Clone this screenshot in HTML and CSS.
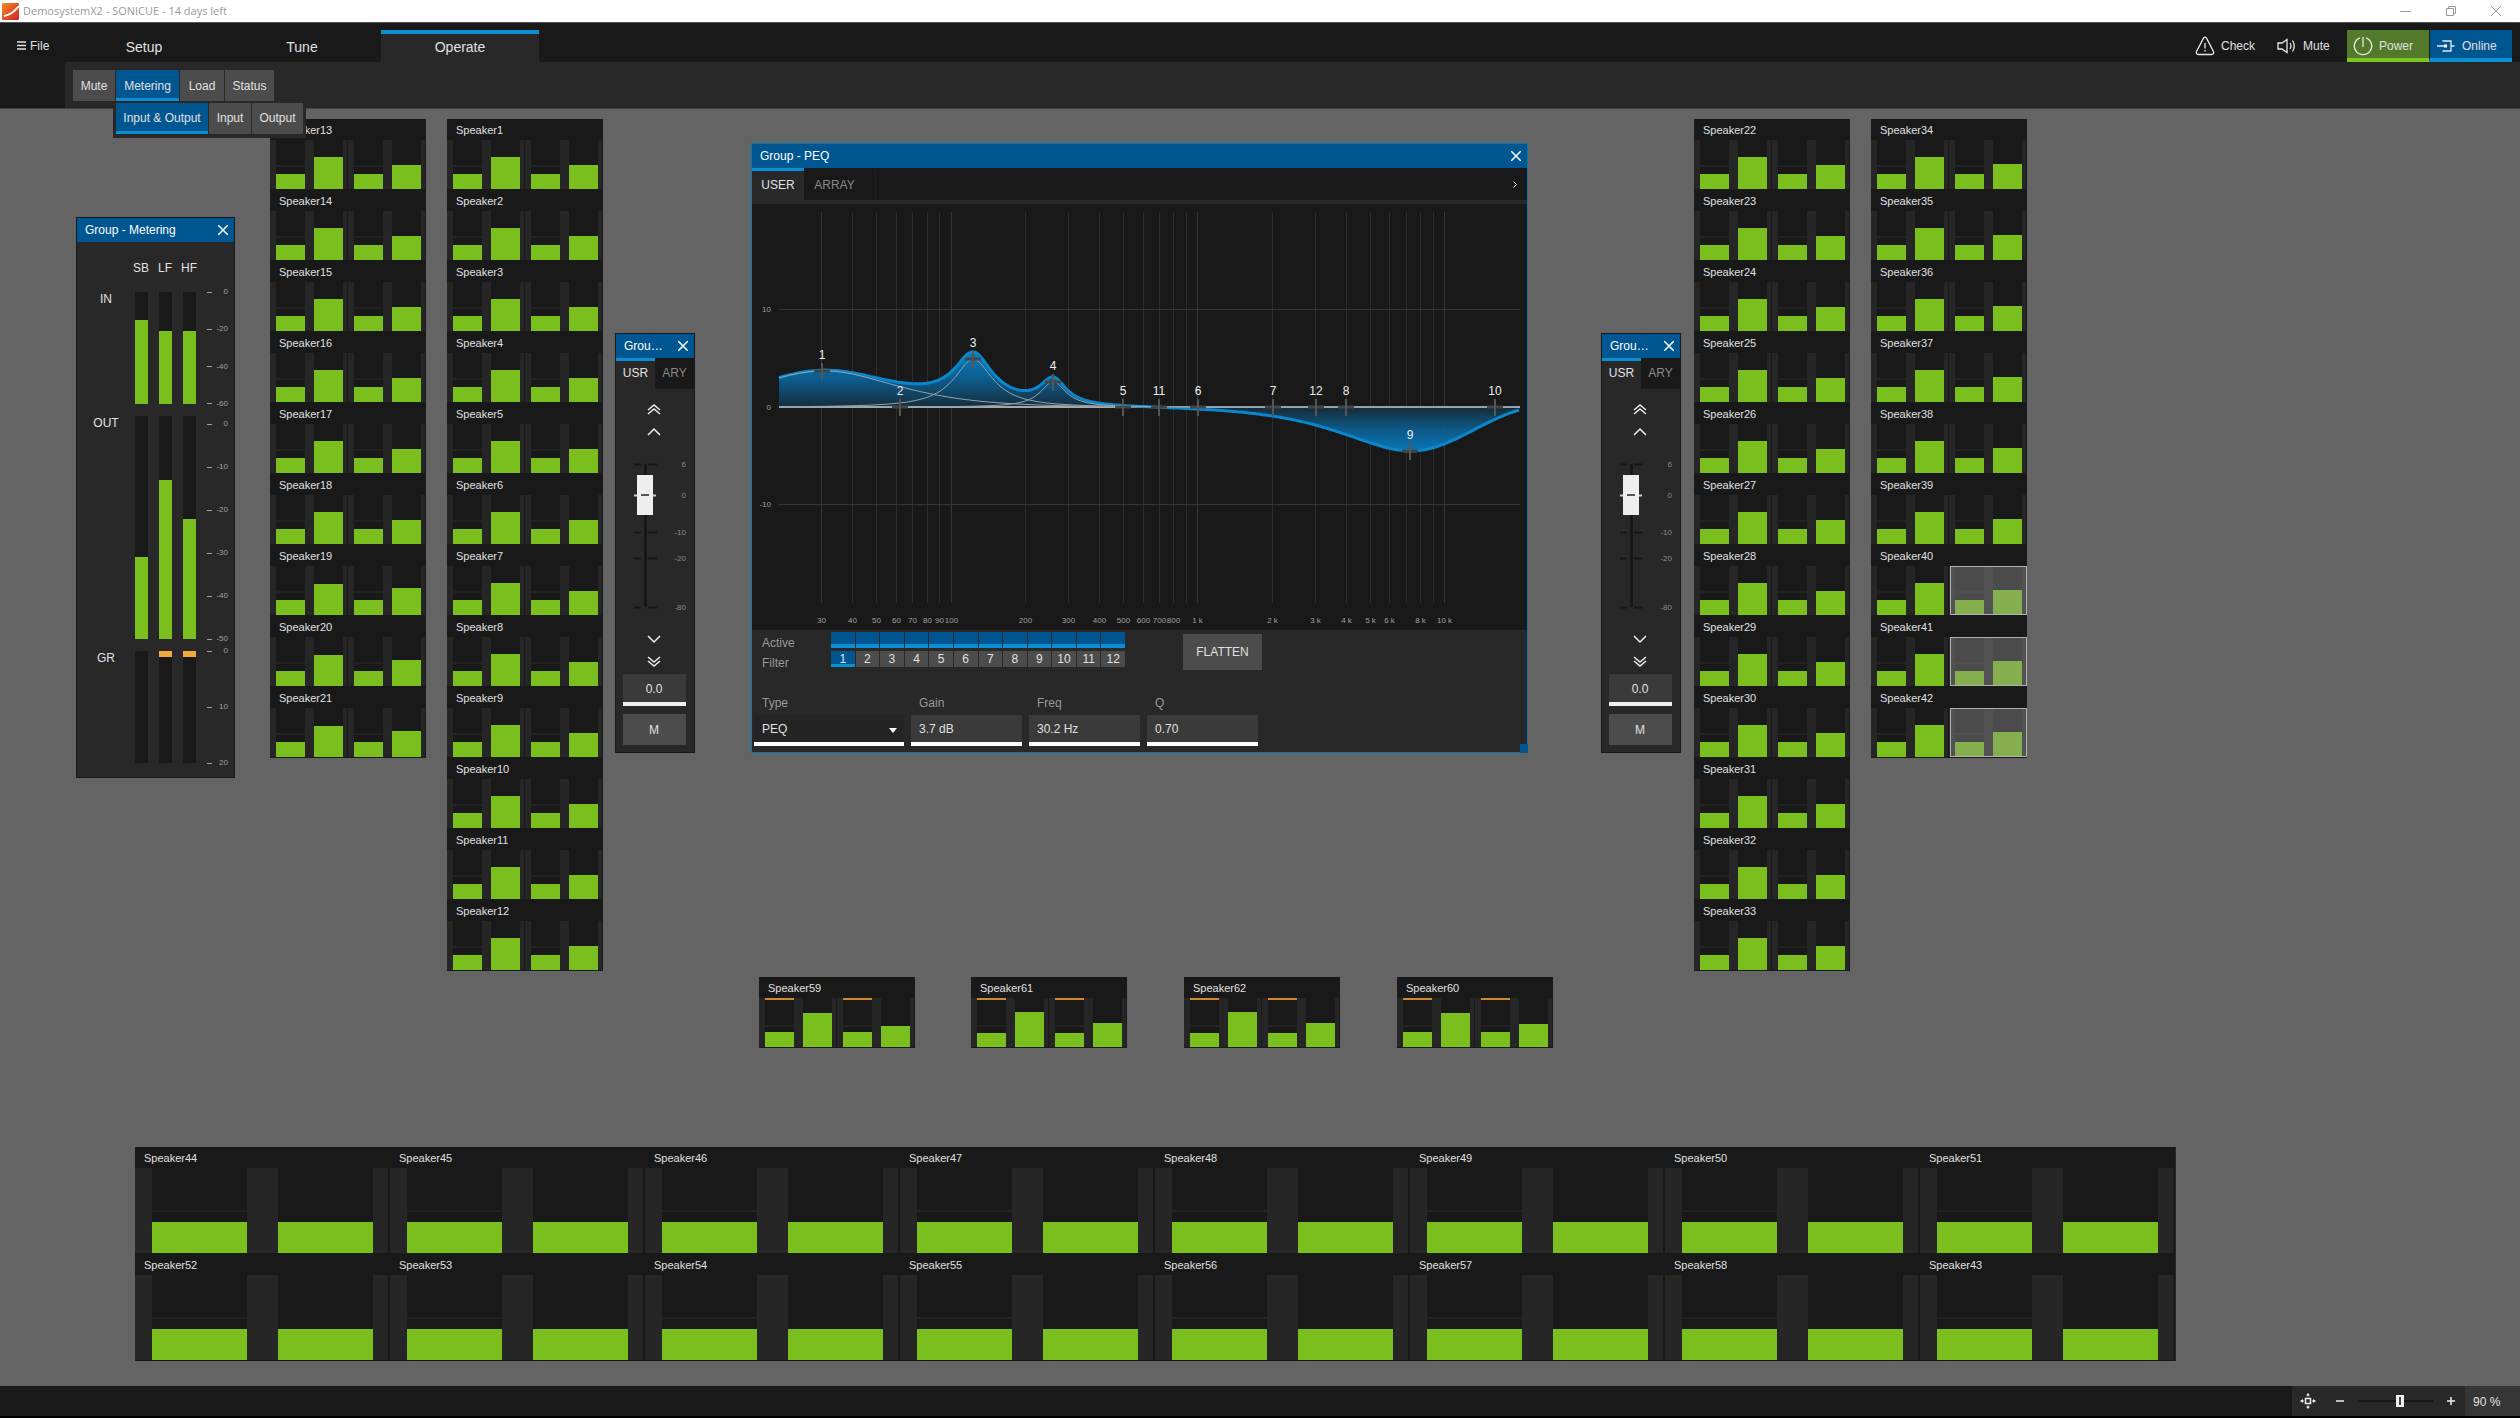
FILE: index.html
```html
<!DOCTYPE html>
<html lang="en">
<head>
<meta charset="utf-8">
<title>DemosystemX2 - SONICUE - 14 days left</title>
<link rel="stylesheet" href="styles.css">
</head>
<body>
<div class="titlebar">
  <svg class="logo" width="17" height="17" viewBox="0 0 17 17"><defs><linearGradient id="lg" x1="0" y1="0" x2="1" y2="1"><stop offset="0" stop-color="#f28a1e"/><stop offset="1" stop-color="#d3202a"/></linearGradient></defs><rect width="17" height="17" rx="1" fill="url(#lg)"/><path d="M2 13C8 12 13 8 17 3" stroke="#fff" stroke-width="2" fill="none"/></svg>
  <span class="titlebar-text">DemosystemX2 - SONICUE - 14 days left</span>
  <div class="win-controls">
    <button aria-label="Minimize"><svg width="12" height="12"><path d="M0 6.5h11"/></svg></button>
    <button aria-label="Restore"><svg width="12" height="12"><path d="M1.500 3.500h7v7h-7zM3.500 3.500v-2h7v7h-2"/></svg></button>
    <button aria-label="Close"><svg width="12" height="12"><path d="M1 1l10 10M11 1L1 11"/></svg></button>
  </div>
</div>

<header class="header">
  <div class="file-area">
    <button class="file-button"><svg width="9" height="9"><path d="M0 1h9M0 4.500h9M0 8h9" stroke="#e4e4e4" stroke-width="1.500"/></svg>File</button>
  </div>
  <div class="header-main">
    <div class="nav-row">
      <nav class="main-tabs">
        <button class="main-tab">Setup</button>
        <button class="main-tab">Tune</button>
        <button class="main-tab is-active">Operate</button>
      </nav>
      <div class="status-actions">
        <button class="status-action check"><svg width="20" height="20" viewBox="0 0 20 20"><path d="M8.500 2.200Q10 .2 11.500 2.200L18.500 15.500Q19.300 18.300 16.500 18.500H3.500Q.7 18.300 1.500 15.500Z"/><path d="M10 7v5.500M10 14v1.500"/></svg>Check</button>
        <button class="status-action mute"><svg width="20" height="20" viewBox="0 0 20 20"><path d="M1 7h4l5-3.500v13L5 13H1zM13 7q2 3 0 6M15.500 4.500q3.500 5.500 0 11"/></svg>Mute</button>
        <button class="status-action power"><svg width="20" height="20" viewBox="0 0 20 20"><path d="M7 1.800a8.700 8.700 0 1 0 6 0M10 1v10"/></svg>Power</button>
        <button class="status-action online"><svg width="20" height="20" viewBox="0 0 20 20"><path d="M1 10h8M7 5.500V5h8v10H7v-.5M15 10h3.500"/><rect x="8" y="8.500" width="3" height="3" fill="#fff" stroke="none"/></svg>Online</button>
      </div>
    </div>
    <div class="tool-row">
      <button class="tool w42">Mute</button>
      <button class="tool w63 is-active">Metering</button>
      <button class="tool w43">Load</button>
      <button class="tool w49">Status</button>
    </div>
    <div class="sub-menu">
      <button class="tool w92 is-active">Input &amp; Output</button>
      <button class="tool w42">Input</button>
      <button class="tool w51">Output</button>
    </div>
  </div>
</header>

<main class="canvas">
  <section class="stack stack-a" data-first="13" data-count="9"></section>
  <section class="stack stack-b" data-first="1" data-count="12"></section>
  <section class="stack stack-c" data-first="22" data-count="12"></section>
  <section class="stack stack-d" data-first="34" data-count="9"></section>
  <section class="stack sub-1" data-first="59" data-count="1"></section>
  <section class="stack sub-2" data-first="61" data-count="1"></section>
  <section class="stack sub-3" data-first="62" data-count="1"></section>
  <section class="stack sub-4" data-first="60" data-count="1"></section>
  <section class="wall"></section>

  <section class="window metering">
    <div class="window-title"><span>Group - Metering</span><button class="close" aria-label="Close"><svg width="10" height="10"><path d="M0 0l10 10M10 0L0 10"/></svg></button></div>
    <div class="bands"><span>SB</span><span>LF</span><span>HF</span></div>
    <div class="level-row">
      <span class="level-name">IN</span>
      <div class="track"><i class="fill" style="height:84px"></i></div>
      <div class="track"><i class="fill" style="height:73px"></i></div>
      <div class="track"><i class="fill" style="height:73px"></i></div>
      <ol class="scale"><li>0</li><li>-20</li><li>-40</li><li>-60</li></ol>
    </div>
    <div class="level-row level-out">
      <span class="level-name">OUT</span>
      <div class="track"><i class="fill" style="height:82px"></i></div>
      <div class="track"><i class="fill" style="height:159px"></i></div>
      <div class="track"><i class="fill" style="height:120px"></i></div>
      <ol class="scale"><li>0</li><li>-10</li><li>-20</li><li>-30</li><li>-40</li><li>-50</li></ol>
    </div>
    <div class="level-row level-gr">
      <span class="level-name">GR</span>
      <div class="track"></div>
      <div class="track"><i class="fill" style="height:6px"></i></div>
      <div class="track"><i class="fill" style="height:6px"></i></div>
      <ol class="scale"><li>0</li><li>10</li><li>20</li></ol>
    </div>
  </section>

  <section class="window fader fader-left">
    <div class="window-title"><span>Grou…</span><button class="close" aria-label="Close"><svg width="10" height="10"><path d="M0 0l10 10M10 0L0 10"/></svg></button></div>
    <div class="fader-tabs"><button class="fader-tab is-active">USR</button><button class="fader-tab">ARY</button></div>
    <div class="fader-body">
      <button class="step" aria-label="Up fast"><svg width="14" height="12"><path d="M1 7l6-5 6 5M1 11l6-5 6 5"/></svg></button>
      <button class="step" aria-label="Up"><svg width="14" height="12"><path d="M1 9l6-6 6 6"/></svg></button>
      <div class="fader-slot">
        <svg width="76" height="183"><path class="slot" d="M29.500 20v143"/><path class="notch" d="M18 20.500h7M32 20.500h9M18 88.500h7M32 88.500h9M18 114.500h7M32 114.500h9M18 163.500h7M32 163.500h9"/><path class="unity" d="M18 51.500h22"/><g class="tick-text"><text x="70" y="23">6</text><text x="70" y="54">0</text><text x="70" y="91">-10</text><text x="70" y="117">-20</text><text x="70" y="166">-80</text></g></svg>
        <input type="range" class="fader-input" aria-label="Level" min="0" max="143" value="112">
      </div>
      <button class="step" aria-label="Down"><svg width="14" height="12"><path d="M1 3l6 6 6-6"/></svg></button>
      <button class="step" aria-label="Down fast"><svg width="14" height="12"><path d="M1 1l6 5 6-5M1 5l6 5 6-5"/></svg></button>
      <input class="fader-value" aria-label="Level value" value="0.0">
      <button class="fader-mute">M</button>
    </div>
  </section>

  <section class="window fader fader-right">
    <div class="window-title"><span>Grou…</span><button class="close" aria-label="Close"><svg width="10" height="10"><path d="M0 0l10 10M10 0L0 10"/></svg></button></div>
    <div class="fader-tabs"><button class="fader-tab is-active">USR</button><button class="fader-tab">ARY</button></div>
    <div class="fader-body">
      <button class="step" aria-label="Up fast"><svg width="14" height="12"><path d="M1 7l6-5 6 5M1 11l6-5 6 5"/></svg></button>
      <button class="step" aria-label="Up"><svg width="14" height="12"><path d="M1 9l6-6 6 6"/></svg></button>
      <div class="fader-slot">
        <svg width="76" height="183"><path class="slot" d="M29.500 20v143"/><path class="notch" d="M18 20.500h7M32 20.500h9M18 88.500h7M32 88.500h9M18 114.500h7M32 114.500h9M18 163.500h7M32 163.500h9"/><path class="unity" d="M18 51.500h22"/><g class="tick-text"><text x="70" y="23">6</text><text x="70" y="54">0</text><text x="70" y="91">-10</text><text x="70" y="117">-20</text><text x="70" y="166">-80</text></g></svg>
        <input type="range" class="fader-input" aria-label="Level" min="0" max="143" value="112">
      </div>
      <button class="step" aria-label="Down"><svg width="14" height="12"><path d="M1 3l6 6 6-6"/></svg></button>
      <button class="step" aria-label="Down fast"><svg width="14" height="12"><path d="M1 1l6 5 6-5M1 5l6 5 6-5"/></svg></button>
      <input class="fader-value" aria-label="Level value" value="0.0">
      <button class="fader-mute">M</button>
    </div>
  </section>

  <section class="window peq">
    <div class="window-title"><span>Group - PEQ</span><button class="close" aria-label="Close"><svg width="10" height="10"><path d="M0 0l10 10M10 0L0 10"/></svg></button></div>
    <div class="peq-tabs">
      <button class="peq-tab is-active">USER</button>
      <button class="peq-tab">ARRAY</button>
      <button class="peq-more" aria-label="More"><svg width="5" height="7"><path d="M.5 .5l3 3-3 3"/></svg></button>
    </div>
    <svg class="graph" viewBox="0 0 775 426">
      <defs>
        <linearGradient id="boost" gradientUnits="userSpaceOnUse" x1="0" y1="147" x2="0" y2="203"><stop offset="0" stop-color="#0889d0"/><stop offset=".5" stop-color="#0b6298"/><stop offset="1" stop-color="#162f3f"/></linearGradient>
        <linearGradient id="cut" gradientUnits="userSpaceOnUse" x1="0" y1="203" x2="0" y2="248"><stop offset="0" stop-color="#162c38"/><stop offset=".5" stop-color="#0c5f92"/><stop offset="1" stop-color="#0880c4"/></linearGradient>
        <clipPath id="above"><rect width="775" height="203"/></clipPath>
        <clipPath id="below"><rect y="203" width="775" height="223"/></clipPath>
      </defs>
    </svg>
    <div class="peq-controls">
      <div class="filter-row">
        <div class="filter-names"><span>Active</span><span>Filter</span></div>
        <div class="filter-grid"></div>
        <button class="flatten">FLATTEN</button>
      </div>
      <div class="field-row">
        <div class="field field-type"><label for="type">Type</label><div class="select-box"><select id="type"><option>PEQ</option></select></div></div>
        <div class="field"><label for="gain">Gain</label><input id="gain" value="3.7 dB"></div>
        <div class="field"><label for="freq">Freq</label><input id="freq" value="30.2 Hz"></div>
        <div class="field"><label for="q">Q</label><input id="q" value="0.70"></div>
      </div>
    </div>
  </section>
</main>

<footer class="statusbar">
  <div class="zoom-tools">
    <button aria-label="Fit"><svg width="16" height="16" viewBox="0 0 16 16"><rect x="5.500" y="5.500" width="5" height="5" fill="none" stroke="#eee" stroke-width="1.500"/><path d="M8 0l2 2.500H6zM8 16l2-2.500H6zM0 8l3-2v4zM16 8l-3-2v4z" fill="#eee"/><path d="M1 8h3M12 8h3M8 1v2.500M8 12.500V15" stroke="#eee"/></svg></button>
    <button aria-label="Zoom out"><svg width="8" height="8"><path d="M0 4h8" stroke="#eee" stroke-width="1.500"/></svg></button>
    <input type="range" class="zoom-input" aria-label="Zoom" min="0" max="100" value="57">
    <button aria-label="Zoom in"><svg width="8" height="8"><path d="M0 4h8M4 0v8" stroke="#eee" stroke-width="1.500"/></svg></button>
  </div>
  <div class="zoom-value">90 %</div>
</footer>
<script src="script.js"></script>
</body>
</html>
```
FILE: styles.css
```css
* { box-sizing: border-box; }

body {
  margin: 0;
  min-height: 100vh;
  display: flex;
  flex-direction: column;
  background: #646464;
  color: #e0e0e0;
  font: 12px/16px "Liberation Sans", Arial, sans-serif;
  overflow-x: hidden;
}

button, input, select { font: inherit; color: inherit; border: 0; padding: 0; margin: 0; background: none; border-radius: 0; outline: 0; }
button { display: flex; align-items: center; justify-content: center; }
svg { display: block; flex: none; }

/* Title bar */
.titlebar { display: flex; align-items: center; height: 23px; background: #fff; border-bottom: 1px solid #555; padding-left: 2px; }
.titlebar-text { margin-left: 4px; font-family: "Open Sans", sans-serif; font-size: 11px; color: #999; }
.win-controls { margin-left: auto; display: flex; gap: 33px; padding-right: 18px; }
.win-controls path { fill: none; stroke: #999; }

/* Header */
.header { display: flex; height: 86px; background: #191919; border-bottom: 1px solid #444; }
.file-area { width: 65px; }
.file-button { gap: 4px; height: 39px; padding: 6px 0 0 17px; }
.header-main { position: relative; flex: 1; }
.nav-row { display: flex; justify-content: space-between; height: 39px; padding-top: 7px; }
.main-tabs { display: flex; }
.main-tab { width: 158px; font-size: 14px; border-top: 4px solid transparent; padding-bottom: 3px; }
.main-tab.is-active { background: #282828; border-color: #0e8ed0; }
.status-actions { display: flex; padding-right: 8px; }
.status-action { justify-content: flex-start; border-bottom: 4px solid transparent; padding-top: 4px; }
.status-action path { fill: none; stroke: #e8e8e8; stroke-width: 1.3; }
.check { gap: 6px; width: 82px; }
.mute { gap: 6px; width: 70px; }
.power { gap: 6px; width: 82px; padding-left: 6px; background: #527a2a; border-color: #7cc41e; }
.online { gap: 6px; width: 83px; padding-left: 6px; background: #005691; border-color: #0a8fd4; border-left: 1px solid #191919; }

.tool-row { display: flex; gap: 1px; height: 46px; padding: 8px; background: #282828; }
.tool { height: 31px; background: #4c4c4c; border-bottom: 3px solid #4c4c4c; padding-top: 3px; }
.tool.is-active { background: #005691; border-color: #0a8fd4; }
.w42 { width: 42px; }
.w43 { width: 44px; }
.w49 { width: 49px; }
.w51 { width: 51px; }
.w63 { width: 63px; }
.w92 { width: 92px; }
.sub-menu { position: absolute; left: 48px; top: 78px; z-index: 5; display: flex; gap: 1px; padding: 2px 3px 4px; background: #282828; }
.sub-menu .tool { padding-top: 1px; }

/* Canvas with freely placed widgets */
.canvas { position: relative; flex: 1; min-height: 1277px; }
.stack, .wall, .window { position: absolute; }
.stack { width: 156px; }
.stack-a { left: 270px; top: 10px; }
.stack-b { left: 447px; top: 10px; }
.stack-c { left: 1694px; top: 10px; }
.stack-d { left: 1871px; top: 10px; }
.sub-1 { left: 759px; top: 868px; }
.sub-2 { left: 971px; top: 868px; }
.sub-3 { left: 1184px; top: 868px; }
.sub-4 { left: 1397px; top: 868px; }

.speaker { height: 71px; background: #191919; border-bottom: 1px solid #191919; }
.speaker-name { height: 21px; padding-left: 9px; font-size: 11px; line-height: 22px; }
.pairs { display: flex; height: 49px; }
.pair { position: relative; display: flex; gap: 9px; width: 78px; padding: 0 4px 0 6px; background: #262626; border-right: 1px solid #191919; }
.meter { position: relative; width: 29px; background: #191919; display: flex; align-items: flex-end; }
.meter:nth-child(odd)::before { content: ""; position: absolute; left: 0; right: 0; top: 25px; height: 2px; background: #222; }
.meter.is-limited { border-top: 2px solid #cf8a34; }
.bar { position: relative; width: 100%; background: #7abf1e; }
.pair.is-selected::after { content: ""; position: absolute; left: 1px; right: -1px; top: 0; bottom: 0; background: rgba(150, 150, 150, .4); border: 1px solid #b0b0b0; }

.wall { left: 135px; top: 1038px; display: grid; grid-template-columns: repeat(8, 255px); border-right: 1px solid #282828; }
.wall .speaker { height: 107px; }
.wall .pairs { height: 85px; }
.wall .pair { width: 255px; gap: 31px; padding: 0 15px 0 17px; border-right-width: 2px; }
.wall .meter { width: 95px; }
.wall .meter:nth-child(odd)::before { top: 42px; }

/* Floating windows */
.window { background: #282828; border: 1px solid #191919; }
.window-title { display: flex; align-items: center; justify-content: space-between; height: 24px; padding: 0 6px 0 8px; background: #005691; color: #fff; }
.close path { stroke: #fff; stroke-width: 1.5; }

.metering { left: 76px; top: 108px; width: 159px; padding-bottom: 14px; }
.bands { display: flex; gap: 4px; margin: 18px 0 16px 54px; }
.bands span { width: 20px; text-align: center; white-space: nowrap; }
.level-row { display: flex; gap: 11px; height: 112px; margin-bottom: 12px; }
.level-name { width: 36px; margin-left: 11px; text-align: center; line-height: 14px; }
.level-out { height: 223px; }
.level-gr { margin-bottom: 0; }
.track { width: 13px; background: #191919; display: flex; align-items: flex-end; }
.level-gr .track { align-items: flex-start; }
.fill { width: 100%; background: #7abf1e; }
.level-gr .fill { background: #f0a93c; }
.scale { display: flex; flex-direction: column; justify-content: space-between; width: 21px; margin: -5px 0; padding: 0; list-style: none; font-size: 8px; line-height: 10px; color: #a0a0a0; }
.level-out .scale { margin-top: 3px; }
.scale li { display: flex; align-items: center; justify-content: space-between; }
.scale li::before { content: ""; width: 5px; height: 1px; background: #a0a0a0; }

.fader { top: 224px; width: 80px; height: 420px; }
.fader-left { left: 615px; }
.fader-right { left: 1601px; }
.fader-tabs { display: flex; height: 31px; }
.fader-tab { flex: 1; background: #191919; color: #8a8a8a; border-top: 3px solid #191919; padding-bottom: 4px; }
.fader-tab.is-active { background: #282828; color: #e0e0e0; border-color: #0a8fd4; }
.fader-body { display: flex; flex-direction: column; align-items: center; padding: 8px 2px 0 0; }
.step { width: 40px; height: 23px; }
.step path { fill: none; stroke: #eee; stroke-width: 1.5; }
.fader-slot { position: relative; height: 184px; padding-top: 1px; }
.slot { stroke: #171717; stroke-width: 3; }
.notch { stroke: #171717; stroke-width: 2; }
.unity { stroke: #ccc; stroke-width: 2; }
.tick-text { font-size: 8px; fill: #8a8a8a; text-anchor: end; }
.fader-input { position: absolute; left: 21px; top: 1px; width: 16px; height: 183px; appearance: none; writing-mode: vertical-lr; direction: rtl; }
.fader-input::-webkit-slider-thumb { appearance: none; width: 16px; height: 40px; background: linear-gradient(#555, #555) center / 8px 2px no-repeat #eee; }
.fader-value { width: 63px; height: 32px; padding-top: 2px; margin-top: 1px; background: #3a3a3a; border-bottom: 4px solid #f0f0f0; text-align: center; }
.fader-mute { width: 63px; height: 31px; margin-top: 8px; background: #4c4c4c; }

.peq { left: 751px; top: 34px; width: 777px; border-color: #0f76ac; }
.peq-tabs { display: flex; height: 36px; background: #191919; border-bottom: 4px solid #282828; }
.peq-tab { width: 52px; border-top: 3px solid #191919; color: #8a8a8a; padding-bottom: 2px; }
.peq-tab.is-active { background: #282828; border-color: #0a8fd4; color: #e0e0e0; }
.peq-tab + .peq-tab { width: 72px; padding-right: 10px; border-right: 1px solid #222; }
.peq-more { margin-left: auto; padding-right: 9px; }
.peq-more path { fill: none; stroke: #fff; }
.graph { width: 100%; background: #191919; }
.grid-line { stroke: #2c2c2c; }
.grid-line.decade { stroke: #363636; }
.axis-text { font-size: 8px; fill: #a0a0a0; }
.zero { stroke: #a8a8a8; stroke-width: 2; }
.single { fill: none; stroke: #8fa3ae; }
.total { fill: none; stroke: #0a86cc; stroke-width: 3; }
.node { stroke: #555; stroke-width: 2; }
.node-dash { stroke: #444; stroke-width: 3; }
.node-text { fill: #eee; text-anchor: middle; }

.peq-controls { height: 122px; padding-top: 2px; }
.filter-row { display: flex; }
.filter-names { display: flex; flex-direction: column; gap: 4px; width: 79px; padding: 3px 0 0 10px; color: #999; }
.filter-grid { display: grid; grid-template-columns: repeat(12, 1fr); gap: 3px 1px; width: 294px; align-content: start; }
.filter-grid button { height: 16px; background: #4c4c4c; border-bottom: 1px solid #4c4c4c; }
.filter-grid .is-active { background: #005691; border-bottom: 4px solid #0a8fd4; }
.filter-grid .is-active:not(:empty) { border-bottom-width: 3px; padding-top: 2px; }
.flatten { width: 79px; height: 36px; margin: 2px 0 0 58px; background: #4c4c4c; }
.field-row { display: flex; gap: 7px; padding: 24px 0 0 2px; }
.field { width: 111px; display: flex; flex-direction: column; gap: 4px; }
.field-type { width: 150px; }
.field label { padding-left: 8px; color: #999; }
.field input, .field select { width: 100%; height: 31px; padding-left: 8px; background: #3a3a3a; border-bottom: 4px solid #fff; appearance: none; }
.field select { display: block; background: #242424; }
.select-box { position: relative; }
.select-box::after { content: ""; position: absolute; right: 7px; top: 13px; border: 4px solid transparent; border-top: 5px solid #fff; border-bottom: 0; }
.peq::after { content: ""; position: absolute; right: -1px; bottom: -1px; width: 8px; height: 9px; background: #005691; }

/* Status bar */
.statusbar { display: flex; justify-content: flex-end; height: 32px; background: #191919; border-bottom: 2px solid #000; }
.zoom-tools { display: flex; align-items: center; width: 173px; padding-left: 8px; background: #282828; }
.zoom-tools button + input, .zoom-tools input + button { margin-left: 14px; }
.zoom-tools button + button { margin-left: 20px; }
.zoom-input { appearance: none; width: 75px; height: 12px; background: linear-gradient(#171717, #171717) center / 100% 2px no-repeat; }
.zoom-input::-webkit-slider-thumb { appearance: none; width: 8px; height: 12px; background: linear-gradient(#444, #444) center / 2px 8px no-repeat #f0f0f0; }
.zoom-value { width: 55px; padding: 8px 0 0 8px; background: #363636; }
```
FILE: script.js
```js
const LEVELS = { 59: [15, 34, 15, 21], 60: [15, 34, 15, 23], 61: [14, 35, 14, 24], 62: [14, 35, 14, 24] };
const SELECTED = [40, 41, 42];

function levelsOf(n) {
  if (LEVELS[n]) return LEVELS[n];
  if (n === 19) return [15, 31, 15, 27];
  if (n === 20 || n === 21) return [15, 31, 15, 26];
  return [15, 32, 15, n >= 34 ? 25 : 24];
}

function meter(height, limited) {
  return `<div class="meter${limited ? ' is-limited' : ''}"><i class="bar" style="height:${height}px"></i></div>`;
}

function speaker(n, pairs) {
  return `<div class="speaker"><div class="speaker-name">Speaker${n}</div><div class="pairs">${pairs}</div></div>`;
}

document.querySelectorAll('.stack').forEach((stack) => {
  const first = Number(stack.dataset.first);
  for (let n = first; n < first + Number(stack.dataset.count); n += 1) {
    const [a, b, c, d] = levelsOf(n);
    const limited = n >= 59;
    const selected = SELECTED.includes(n) ? ' is-selected' : '';
    stack.insertAdjacentHTML('beforeend', speaker(n,
      `<div class="pair">${meter(a, limited)}${meter(b)}</div><div class="pair${selected}">${meter(c, limited)}${meter(d)}</div>`));
  }
});

const wall = document.querySelector('.wall');
[44, 45, 46, 47, 48, 49, 50, 51, 52, 53, 54, 55, 56, 57, 58, 43].forEach((n) => {
  wall.insertAdjacentHTML('beforeend', speaker(n, `<div class="pair">${meter(31)}${meter(31)}</div>`));
});

const grid = document.querySelector('.filter-grid');
for (let i = 1; i <= 12; i += 1) grid.insertAdjacentHTML('beforeend', `<button class="is-active" aria-label="Filter ${i} active"></button>`);
for (let i = 1; i <= 12; i += 1) grid.insertAdjacentHTML('beforeend', `<button${i === 1 ? ' class="is-active"' : ''}>${i}</button>`);

/* Equalizer graph */
const ZERO = 203;
const xOf = (f) => 200 + 246.8 * Math.log10(f / 100);
const yOf = (db) => ZERO - 9.77 * db;
const warp = (f) => Math.tan(Math.PI * f / 48000);

function bell(f, f0, gain, q) {
  const w = warp(f) / warp(f0);
  const g = 10 ** (Math.abs(gain) / 20);
  const base = (1 - w * w) ** 2;
  const side = (w / q) ** 2;
  return Math.sign(gain) * 10 * Math.log10((base + g * g * side) / (base + side));
}

const FILTERS = [[30.2, 3.7, 0.7], [122, 4.9, 3], [257, 2.6, 4], [7240, -4.5, 0.7]];
function trace(fn) {
  const points = [];
  for (let x = 27; x <= 768; x += 2) {
    points.push(`${x} ${yOf(fn(100 * 10 ** ((x - 200) / 246.8))).toFixed(1)}`);
  }
  return 'M' + points.join('L');
}

const gridLines = [];
const labels = [];
[30, 40, 50, 60, 70, 80, 90, 100, 200, 300, 400, 500, 600, 700, 800, 900, 1000, 2000, 3000, 4000, 5000, 6000, 7000, 8000, 9000, 10000].forEach((f) => {
  const x = Math.floor(xOf(f)) - 0.5;
  gridLines.push(`<path class="grid-line${[30, 100, 1000, 10000].includes(f) ? ' decade' : ''}" d="M${x} 8V399"/>`);
  if (![900, 7000, 9000].includes(f)) {
    labels.push(`<text class="axis-text" text-anchor="middle" x="${x}" y="419">${f >= 1000 ? f / 1000 + ' k' : f}</text>`);
  }
});
gridLines.push('<path class="grid-line decade" d="M27 105.5H768M27 300.5H768"/>');
labels.push('<g class="axis-text" text-anchor="end"><text x="19" y="108">10</text><text x="19" y="206">0</text><text x="19" y="303">-10</text></g>');

const total = trace((f) => FILTERS.reduce((sum, p) => sum + bell(f, ...p), 0));
const area = `${total}L768 ${ZERO}L27 ${ZERO}Z`;
let out = gridLines.join('') + labels.join('');
out += `<path d="${area}" fill="url(#boost)" clip-path="url(#above)" opacity=".92"/><path d="${area}" fill="url(#cut)" clip-path="url(#below)" opacity=".92"/>`;
out += `<path class="zero" d="M27 ${ZERO}H768"/><path class="total" d="${total}"/>`;
FILTERS.slice(0, 3).forEach((p) => { out += `<path class="single" d="${trace((f) => bell(f, ...p))}"/>`; });
[[1, 70, 167], [2, 148, 203], [3, 221, 155], [4, 301, 178], [5, 371, 203], [11, 407, 203], [6, 446, 203], [7, 521, 203], [12, 564, 203], [8, 594, 203], [9, 658, 247], [10, 743, 203]].forEach(([name, x, y]) => {
  out += `<path class="node-dash" d="M${x - 8} ${y}h16"/><path class="node" d="M${x} ${y - 8}v17"/><text class="node-text" x="${x}" y="${y - 12}">${name}</text>`;
});
document.querySelector('.graph').insertAdjacentHTML('beforeend', out);
```
